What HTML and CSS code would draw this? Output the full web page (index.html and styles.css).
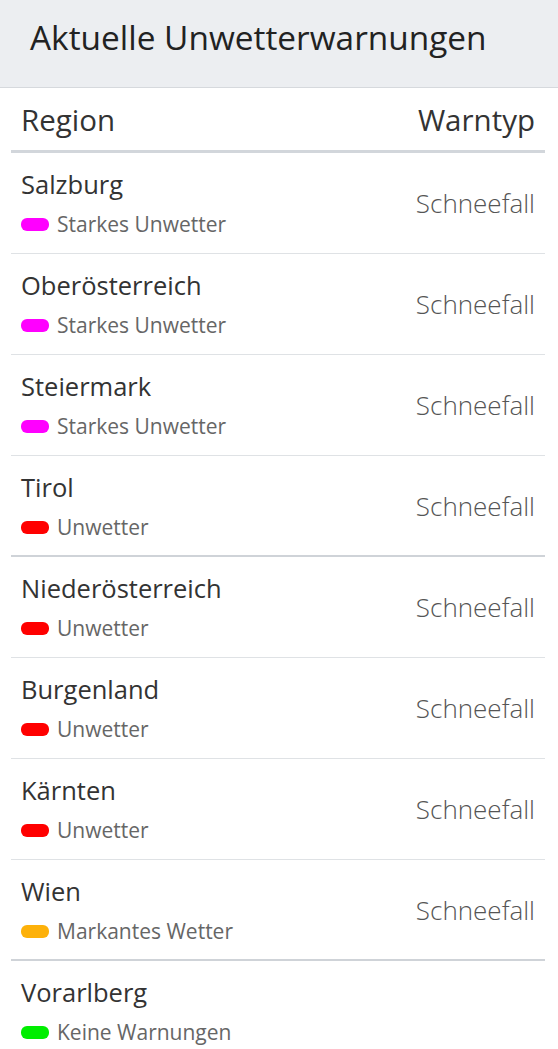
FILE: index.html
```html
<!doctype html>
<html>
<head>
<meta charset="utf-8">
<title>Aktuelle Unwetterwarnungen</title>
<link rel="stylesheet" href="styles.css">
</head>
<body>
<div id="header">
  <h2>Aktuelle Unwetterwarnungen</h2>
</div>
<table id="warnings">
  <thead>
    <tr><th class="region">Region</th><th class="type">Warntyp</th></tr>
  </thead>
  <tbody>
    <tr><td><div class="name">Salzburg</div><div class="level"><span class="dot violet"></span>Starkes Unwetter</div></td><td class="type">Schneefall</td></tr>
    <tr><td><div class="name">Oberösterreich</div><div class="level"><span class="dot violet"></span>Starkes Unwetter</div></td><td class="type">Schneefall</td></tr>
    <tr><td><div class="name">Steiermark</div><div class="level"><span class="dot violet"></span>Starkes Unwetter</div></td><td class="type">Schneefall</td></tr>
    <tr class="strong"><td><div class="name">Tirol</div><div class="level"><span class="dot red"></span>Unwetter</div></td><td class="type">Schneefall</td></tr>
    <tr><td><div class="name">Niederösterreich</div><div class="level"><span class="dot red"></span>Unwetter</div></td><td class="type">Schneefall</td></tr>
    <tr><td><div class="name">Burgenland</div><div class="level"><span class="dot red"></span>Unwetter</div></td><td class="type">Schneefall</td></tr>
    <tr><td><div class="name">Kärnten</div><div class="level"><span class="dot red"></span>Unwetter</div></td><td class="type">Schneefall</td></tr>
    <tr class="strong"><td><div class="name">Wien</div><div class="level"><span class="dot orange"></span>Markantes Wetter</div></td><td class="type">Schneefall</td></tr>
    <tr><td><div class="name">Vorarlberg</div><div class="level"><span class="dot green"></span>Keine Warnungen</div></td><td class="type"></td></tr>
  </tbody>
</table>
</body>
</html>
```

FILE: styles.css
```css
body {
	margin: 0;
	background: #fff;
	font-family: "Open Sans", "Noto Sans", sans-serif;
	color: #333;
}
#header {
	height: 87px;
	background-color: #eceef1;
	border-bottom: 1px solid #d6d9dd;
	display: flex;
	align-items: center;
	padding-left: 30px;
}
#header h2 {
	margin: 0;
	font-size: 33.4px;
	font-weight: 400;
	color: #222;
	margin-top: -14px;
}
#warnings {
	width: 534px;
	margin: 0 11px;
	border-collapse: collapse;
}
#warnings th {
	height: 62px;
	padding: 0 10px;
	font-size: 29.5px;
	font-weight: 400;
	color: #333;
	text-align: left;
	border-bottom: 3px solid #d2d6db;
	vertical-align: middle;
}
#warnings th.type, #warnings td.type {
	text-align: right;
}
#warnings td {
	padding: 17px 10px 17px 10px;
	border-bottom: 1px solid #dfe2e5;
	vertical-align: middle;
}
#warnings tr.strong td {
	padding-bottom: 16px;
	border-bottom: 2px solid #cfd3d8;
}
#warnings tbody tr:last-child td {
	border-bottom: none;
}
.name {
	font-size: 25.5px;
	line-height: 29px;
	color: #333;
}
.level {
	margin-top: 13px;
	font-size: 21px;
	line-height: 24px;
	color: #666;
	display: flex;
	align-items: center;
}
.dot {
	width: 28px;
	height: 13px;
	border-radius: 6px;
	margin-right: 8px;
}
.violet { background-color: #f0f; }
.red { background-color: #f00; }
.orange { background-color: #fdb10a; }
.green { background-color: #0e0; }
td.type {
	font-size: 26px;
	font-weight: 300;
	color: #555;
}
```
